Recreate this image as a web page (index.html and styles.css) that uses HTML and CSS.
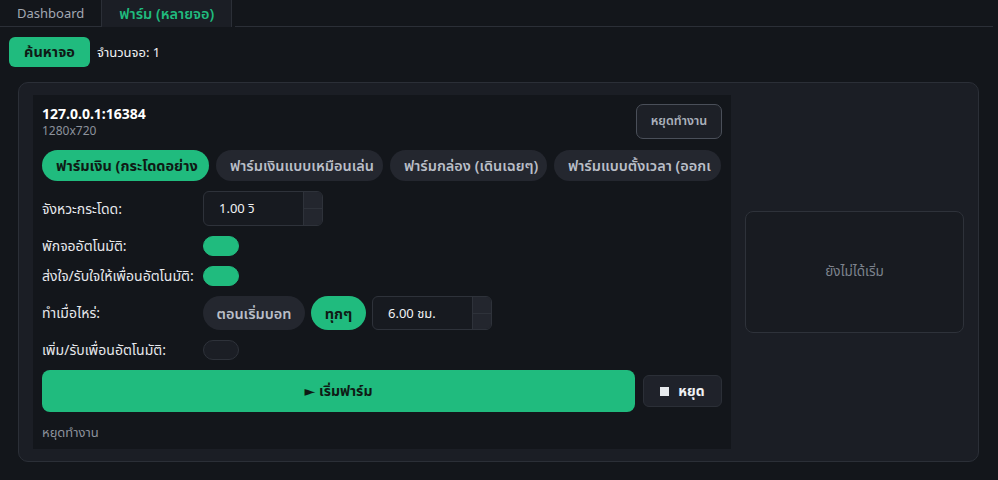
FILE: index.html
```html
<!DOCTYPE html>
<html lang="th">
<head>
    <meta charset="UTF-8">
    <meta name="viewport" content="width=device-width, initial-scale=1.0">
    <title>ฟาร์ม (หลายจอ)</title>
    <link rel="stylesheet" href="styles.css">
</head>
<body>
    <div class="tabs">
        <div class="tab">Dashboard</div>
        <div class="tab active">ฟาร์ม (หลายจอ)</div>
        <div class="tab-rest"></div>
    </div>

    <div class="page">
        <div class="toolbar">
            <button class="btn-green">ค้นหาจอ</button>
            <span class="count">จำนวนจอ: 1</span>
        </div>

        <div class="device-card">
            <div class="panel">
                <div class="panel-head">
                    <div>
                        <div class="addr">127.0.0.1:16384</div>
                        <div class="res">1280x720</div>
                    </div>
                    <button class="btn-ghost">หยุดทำงาน</button>
                </div>

                <div class="modes">
                    <div class="pill on">ฟาร์มเงิน (กระโดดอย่าง</div>
                    <div class="pill">ฟาร์มเงินแบบเหมือนเล่น</div>
                    <div class="pill">ฟาร์มกล่อง (เดินเฉยๆ)</div>
                    <div class="pill">ฟาร์มแบบตั้งเวลา (ออกเ</div>
                </div>

                <div class="row">
                    <label>จังหวะกระโดด:</label>
                    <div class="num">
                        <span class="num-val">1.00 วิ</span>
                        <span class="spin"><i></i><i></i></span>
                    </div>
                </div>
                <div class="row">
                    <label>พักจออัตโนมัติ:</label>
                    <span class="toggle on"></span>
                </div>
                <div class="row">
                    <label>ส่งใจ/รับใจให้เพื่อนอัตโนมัติ:</label>
                    <span class="toggle on"></span>
                </div>
                <div class="row">
                    <label>ทำเมื่อไหร่:</label>
                    <div class="choice">
                        <div class="pill small">ตอนเริ่มบอท</div>
                        <div class="pill small on">ทุกๆ</div>
                        <div class="num">
                            <span class="num-val">6.00 ชม.</span>
                            <span class="spin"><i></i><i></i></span>
                        </div>
                    </div>
                </div>
                <div class="row">
                    <label>เพิ่ม/รับเพื่อนอัตโนมัติ:</label>
                    <span class="toggle"></span>
                </div>

                <div class="actions">
                    <button class="btn-start">► เริ่มฟาร์ม</button>
                    <button class="btn-stop"><span class="sq"></span>หยุด</button>
                </div>

                <div class="status">หยุดทำงาน</div>
            </div>

            <div class="preview">ยังไม่ได้เริ่ม</div>
        </div>
    </div>
</body>
</html>
```

FILE: styles.css
```css
*{
    margin: 0;
    padding: 0;
    box-sizing: border-box;
}
body{
    background-color: #13161b;
    color: #e6e8ec;
    font-family: "Noto Sans", "Noto Sans Thai", Tahoma, "DejaVu Sans", sans-serif;
    font-size: 13px;
}
button{
    font-family: inherit;
    border: none;
    cursor: pointer;
}
/* top tabs */
.tabs{
    display: flex;
    height: 27px;
}
.tab{
    padding: 0 17px;
    line-height: 26px;
    color: #a2a8b3;
    font-size: 13px;
    border-bottom: 1px solid #2b2f37;
}
.tab.active{
    width: 131px;
    padding: 0;
    text-align: center;
    color: #20bb7e;
    font-size: 14.5px;
    font-weight: 600;
    background-color: #1b1e25;
    border-left: 1px solid #2b2f37;
    border-right: 1px solid #2b2f37;
    border-bottom: none;
}
.tab-rest{
    flex: 1;
    margin-left: 3px;
    margin-right: 5px;
    border-bottom: 1px solid #2b2f37;
}
.page{
    padding: 10px 9px;
}
.toolbar{
    display: flex;
    align-items: center;
    gap: 7px;
}
.btn-green{
    width: 81px;
    height: 30px;
    border-radius: 6px;
    background-color: #20bb7e;
    color: #0f1a15;
    font-weight: bold;
    font-size: 14.5px;
}
.count{
    font-size: 13px;
    line-height: 18px;
    color: #f1f2f4;
}
/* device card */
.device-card{
    margin: 15px 10px 0 9px;
    padding: 12px 14px;
    background-color: #1b1e25;
    border: 1px solid #2b2f37;
    border-radius: 10px;
    display: flex;
    align-items: center;
    gap: 14px;
}
.panel{
    width: 698px;
    background-color: #13161b;
    padding: 9px;
    display: flex;
    flex-direction: column;
    gap: 10px;
}
.panel-head{
    display: flex;
    justify-content: space-between;
    align-items: center;
    height: 35px;
}
.addr{
    font-weight: bold;
    font-size: 14px;
    color: #fff;
    line-height: 18px;
}
.res{
    color: #8c929c;
    font-size: 12px;
    line-height: 16px;
}
.btn-ghost{
    width: 86px;
    height: 35px;
    border-radius: 7px;
    border: 1px solid #4a4f59;
    background-color: #1d2027;
    color: #aab0bb;
    font-size: 12.5px;
    font-weight: 600;
}
.modes{
    display: flex;
    gap: 7px;
    margin-top: 1px;
}
.pill{
    height: 31px;
    line-height: 31px;
    padding: 0 14px;
    border-radius: 16px;
    background-color: #24272f;
    color: #b9bec7;
    font-size: 14.5px;
    font-weight: 600;
    white-space: nowrap;
    overflow: hidden;
    flex: 1;
    text-align: center;
}
.modes .pill:nth-child(1){ flex: 0 0 167px; }
.modes .pill:nth-child(2){ flex: 0 0 167px; }
.modes .pill:nth-child(3){ flex: 0 0 157px; }
.modes .pill:nth-child(4){ flex: 0 0 167px; text-align: left; }
.pill.on{
    background-color: #20bb7e;
    color: #0f1a15;
    font-weight: bold;
}
.pill.small{
    flex: none;
    height: 34px;
    line-height: 34px;
    border-radius: 17px;
}
.choice .pill:first-child{ width: 102px; padding: 0; }
.choice .pill.on{ width: 55px; padding: 0; }
.row{
    display: flex;
    align-items: center;
}
.row label{
    width: 161px;
    font-size: 14px;
    line-height: 20px;
    color: #e6e8ec;
}
.choice{
    display: flex;
    gap: 6px;
    align-items: center;
}
.num{
    width: 120px;
    height: 35px;
    border: 1px solid #2e323a;
    border-radius: 6px;
    background-color: #171a20;
    display: flex;
    overflow: hidden;
}
.choice .num{
    height: 34px;
}
.num-val{
    flex: 1;
    padding-left: 15px;
    line-height: 33px;
    font-size: 13px;
    color: #f1f2f4;
}
.spin{
    width: 19px;
    display: flex;
    flex-direction: column;
    border-left: 1px solid #2e323a;
}
.spin i{
    flex: 1;
    background-color: #23262e;
}
.spin i + i{
    border-top: 1px solid #2e323a;
}
.toggle{
    width: 36px;
    height: 20px;
    border-radius: 10px;
    background-color: #1b1e25;
    border: 1px solid #2e323a;
}
.toggle.on{
    background-color: #20bb7e;
    border-color: #20bb7e;
}
.actions{
    display: flex;
    align-items: center;
    gap: 8px;
}
.btn-start{
    flex: 1;
    height: 42px;
    border-radius: 8px;
    background-color: #20bb7e;
    color: #0f1a15;
    font-weight: bold;
    font-size: 14px;
}
.btn-stop{
    width: 79px;
    height: 32px;
    border-radius: 6px;
    background-color: #1f222a;
    border: 1px solid #2b2f37;
    color: #eef0f3;
    font-weight: bold;
    font-size: 14px;
    display: flex;
    align-items: center;
    justify-content: center;
    gap: 9px;
}
.sq{
    width: 9px;
    height: 9px;
    background-color: #e8ebee;
}
.status{
    font-size: 13px;
    color: #8c929c;
    line-height: 16px;
    margin-top: 2px;
}
.preview{
    width: 219px;
    height: 122px;
    border: 1px solid #2e323a;
    border-radius: 8px;
    background-color: #181b21;
    display: flex;
    align-items: center;
    justify-content: center;
    color: #7d838e;
    font-size: 13.5px;
}
```
